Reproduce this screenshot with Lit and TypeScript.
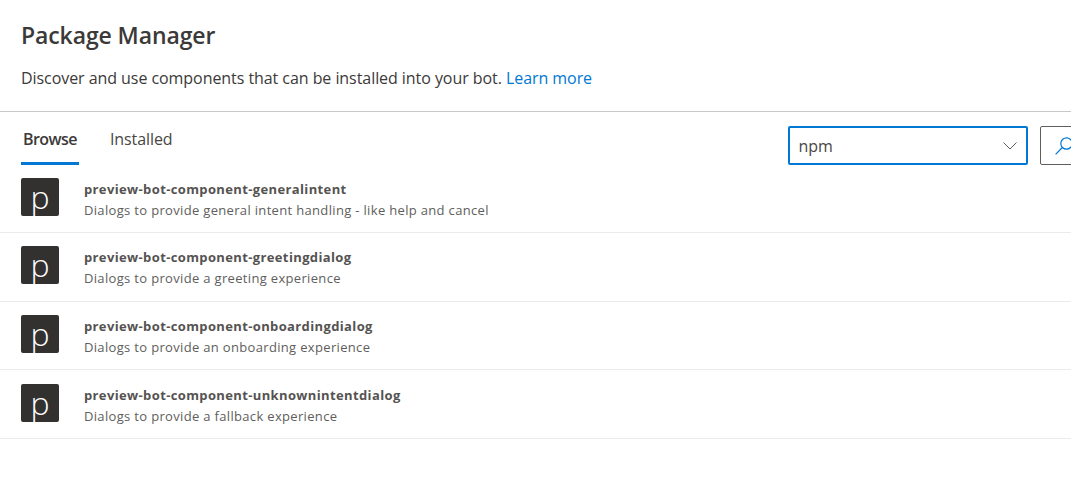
import { LitElement, html, css, svg } from "lit";
import { customElement } from "lit/decorators.js";

const ROWS = [
  ["preview-bot-component-generalintent", "Dialogs to provide general intent handling - like help and cancel"],
  ["preview-bot-component-greetingdialog", "Dialogs to provide a greeting experience"],
  ["preview-bot-component-onboardingdialog", "Dialogs to provide an onboarding experience"],
  ["preview-bot-component-unknownintentdialog", "Dialogs to provide a fallback experience"],
];

@customElement("app-root")
export class AppRoot extends LitElement {
  static styles = css`
    :host {
      display: block;
      width: 1071px;
      height: 495px;
      overflow: hidden;
      background: #fff;
      font-family: "Open Sans", "Noto Sans", sans-serif;
      color: #323130;
    }
    .head { padding: 19px 21px 0; box-sizing: border-box; border-bottom: 1px solid #c8c8c8; height: 112px; }
    h1 { margin: 0; font-size: 23px; line-height: 32px; font-weight: 600; letter-spacing: -0.1px; color: #3b3a39; }
    .sub { margin: 16px 0 0; font-size: 16px; line-height: 22px; letter-spacing: -0.06px; color: #3b3a39; }
    .sub a { color: #0078d4; text-decoration: none; }
    .bar { display: flex; height: 52.6px; padding-left: 21px; width: 1100px; }
    .tabs { display: flex; gap: 31px; }
    .tab { font-size: 16px; height: 53px; line-height: 54px; letter-spacing: -0.1px; box-sizing: border-box; color: #484644; }
    .tab.on { font-weight: 600; border-bottom: 3px solid #0078d4; width: 58px; padding-left: 2px; letter-spacing: -0.55px; color: #3b3a39; }
    .search { display: flex; gap: 12px; margin-left: 616px; margin-top: 14px; }
    .combo { width: 240px; height: 39px; box-sizing: border-box; border: 2px solid #0078d4; border-radius: 2px; display: flex; align-items: center; justify-content: space-between; padding: 0 9px 0 8px; font-size: 16px; color: #484644; }
    .btn { width: 60px; height: 39px; box-sizing: border-box; border: 1px solid #605e5c; border-radius: 2px; background: #fff; padding: 0 0 0 14px; display: flex; align-items: center; }
    svg { display: block; }
    .row { height: 68.6px; box-sizing: border-box; border-bottom: 1px solid #edebe9; display: flex; align-items: flex-start; padding: 13.2px 0 0 21px; }
    .icon { width: 38px; height: 38px; border-radius: 2px; background: #323130; color: #fff; font-size: 32px; line-height: 38px; text-align: center; flex: none; font-weight: 350; }
    .txt { margin-left: 25px; }
    .name { font-size: 13px; font-weight: 700; line-height: 18px; margin-top: 2px; color: #555351; letter-spacing: 0.37px; }
    .desc { font-size: 13px; line-height: 18px; margin-top: 3px; color: #605e5c; letter-spacing: 0.33px; }
  `;

  render() {
    return html`
      <div class="head">
        <h1>Package Manager</h1>
        <p class="sub">Discover and use components that can be installed into your bot. <a>Learn more</a></p>
      </div>
      <div class="bar">
        <div class="tabs">
          <div class="tab on">Browse</div>
          <div class="tab">Installed</div>
        </div>
        <div class="search">
          <div class="combo"><span>npm</span>
            <svg width="14" height="8" viewBox="0 0 14 8" fill="none" stroke="#605e5c" stroke-width="1"><path d="M.5.5 7 7 13.5.5"/></svg>
          </div>
          <div class="btn">
            <svg width="18" height="18" viewBox="0 0 18 18" fill="none" stroke="#0078d4" stroke-width="1.2">${svg`<circle cx="11.5" cy="6.5" r="5.7"/><path d="M7.3 10.5.6 17.4"/>`}</svg>
          </div>
        </div>
      </div>
      ${ROWS.map(([n, d]) => html`
        <div class="row">
          <div class="icon">p</div>
          <div class="txt"><div class="name">${n}</div><div class="desc">${d}</div></div>
        </div>`)}
    `;
  }
}
